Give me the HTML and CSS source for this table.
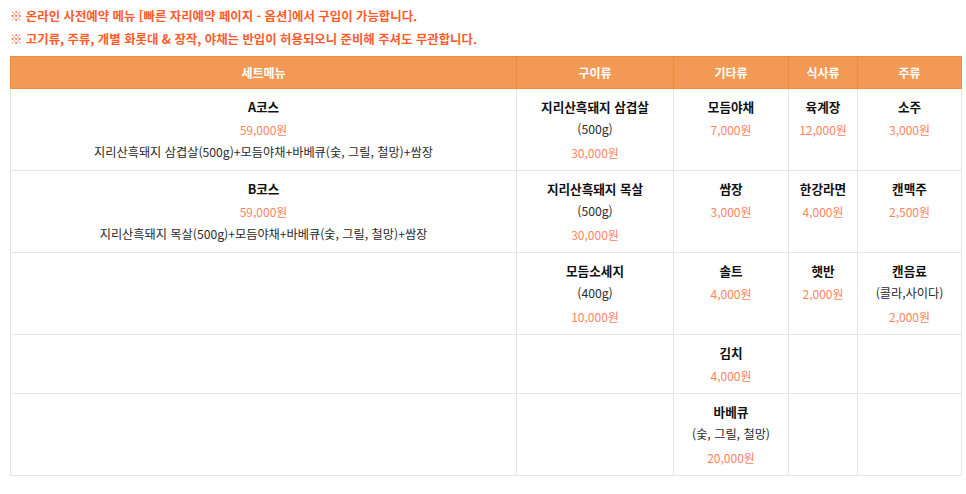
FILE: index.html
```html
<!DOCTYPE html>
<html lang="ko">
<head>
<meta charset="utf-8">
<link rel="stylesheet" href="styles.css">
</head>
<body>
<div class="page">
  <div class="notice">
    <p>※ 온라인 사전예약 메뉴 [빠른 자리예약 페이지 - 옵션]에서 구입이 가능합니다.</p>
    <p>※ 고기류, 주류, 개별 화롯대 &amp; 장작, 야채는 반입이 허용되오니 준비해 주셔도 무관합니다.</p>
  </div>
  <table class="menu">
    <colgroup>
      <col class="c1"><col class="c2"><col class="c3"><col class="c4"><col class="c5">
    </colgroup>
    <thead>
      <tr><th>세트메뉴</th><th>구이류</th><th>기타류</th><th>식사류</th><th>주류</th></tr>
    </thead>
    <tbody>
      <tr>
        <td><div class="name">A코스</div><div class="price">59,000원</div><div class="desc">지리산흑돼지 삼겹살(500g)+모듬야채+바베큐(숯, 그릴, 철망)+쌈장</div></td>
        <td><div class="name">지리산흑돼지 삼겹살</div><div class="desc">(500g)</div><div class="price">30,000원</div></td>
        <td><div class="name">모듬야채</div><div class="price">7,000원</div></td>
        <td><div class="name">육계장</div><div class="price">12,000원</div></td>
        <td><div class="name">소주</div><div class="price">3,000원</div></td>
      </tr>
      <tr>
        <td><div class="name">B코스</div><div class="price">59,000원</div><div class="desc">지리산흑돼지 목살(500g)+모듬야채+바베큐(숯, 그릴, 철망)+쌈장</div></td>
        <td><div class="name">지리산흑돼지 목살</div><div class="desc">(500g)</div><div class="price">30,000원</div></td>
        <td><div class="name">쌈장</div><div class="price">3,000원</div></td>
        <td><div class="name">한강라면</div><div class="price">4,000원</div></td>
        <td><div class="name">캔맥주</div><div class="price">2,500원</div></td>
      </tr>
      <tr>
        <td></td>
        <td><div class="name">모듬소세지</div><div class="desc">(400g)</div><div class="price">10,000원</div></td>
        <td><div class="name">솔트</div><div class="price">4,000원</div></td>
        <td><div class="name">햇반</div><div class="price">2,000원</div></td>
        <td><div class="name">캔음료</div><div class="desc">(콜라,사이다)</div><div class="price">2,000원</div></td>
      </tr>
      <tr>
        <td></td>
        <td></td>
        <td><div class="name">김치</div><div class="price">4,000원</div></td>
        <td></td>
        <td></td>
      </tr>
      <tr>
        <td></td>
        <td></td>
        <td><div class="name">바베큐</div><div class="desc">(숯, 그릴, 철망)</div><div class="price">20,000원</div></td>
        <td></td>
        <td></td>
      </tr>
    </tbody>
  </table>
</div>
</body>
</html>
```
FILE: styles.css
```css
* { box-sizing: border-box; }
html, body { margin: 0; padding: 0; background: #fff; }
body {
  font-family: "Noto Sans CJK KR", "Noto Sans", sans-serif;
  color: #222;
}
.page { padding: 5px 6px 0 10px; }
.notice p {
  margin: 0;
  font-size: 12.4px;
  line-height: 23px;
  font-weight: 700;
  color: #ff5b2b;
}
.notice { margin-bottom: 5px; }
.menu {
  width: 951px;
  border-collapse: collapse;
  table-layout: fixed;
}
.c1 { width: 506px; }
.c2 { width: 157px; }
.c3 { width: 115px; }
.c4 { width: 69px; }
.c5 { width: 104px; }
.menu th {
  background: #f29a55;
  color: #fff;
  font-weight: 700;
  font-size: 12px;
  height: 32px;
  border: 1px solid #f08a3c;
  padding: 0;
}
.menu td {
  border: 1px solid #e6e6e6;
  vertical-align: top;
  text-align: center;
  padding: 6px 4px 6px;
  font-size: 12px;
  line-height: 23px;
}
.name, .price, .desc { height: 23px; line-height: 23px; }
.name { font-weight: 700; color: #111; font-size: 12.6px; }
.price { color: #ff8463; }
.desc { color: #2a2a2a; font-size: 12.2px; }
```
